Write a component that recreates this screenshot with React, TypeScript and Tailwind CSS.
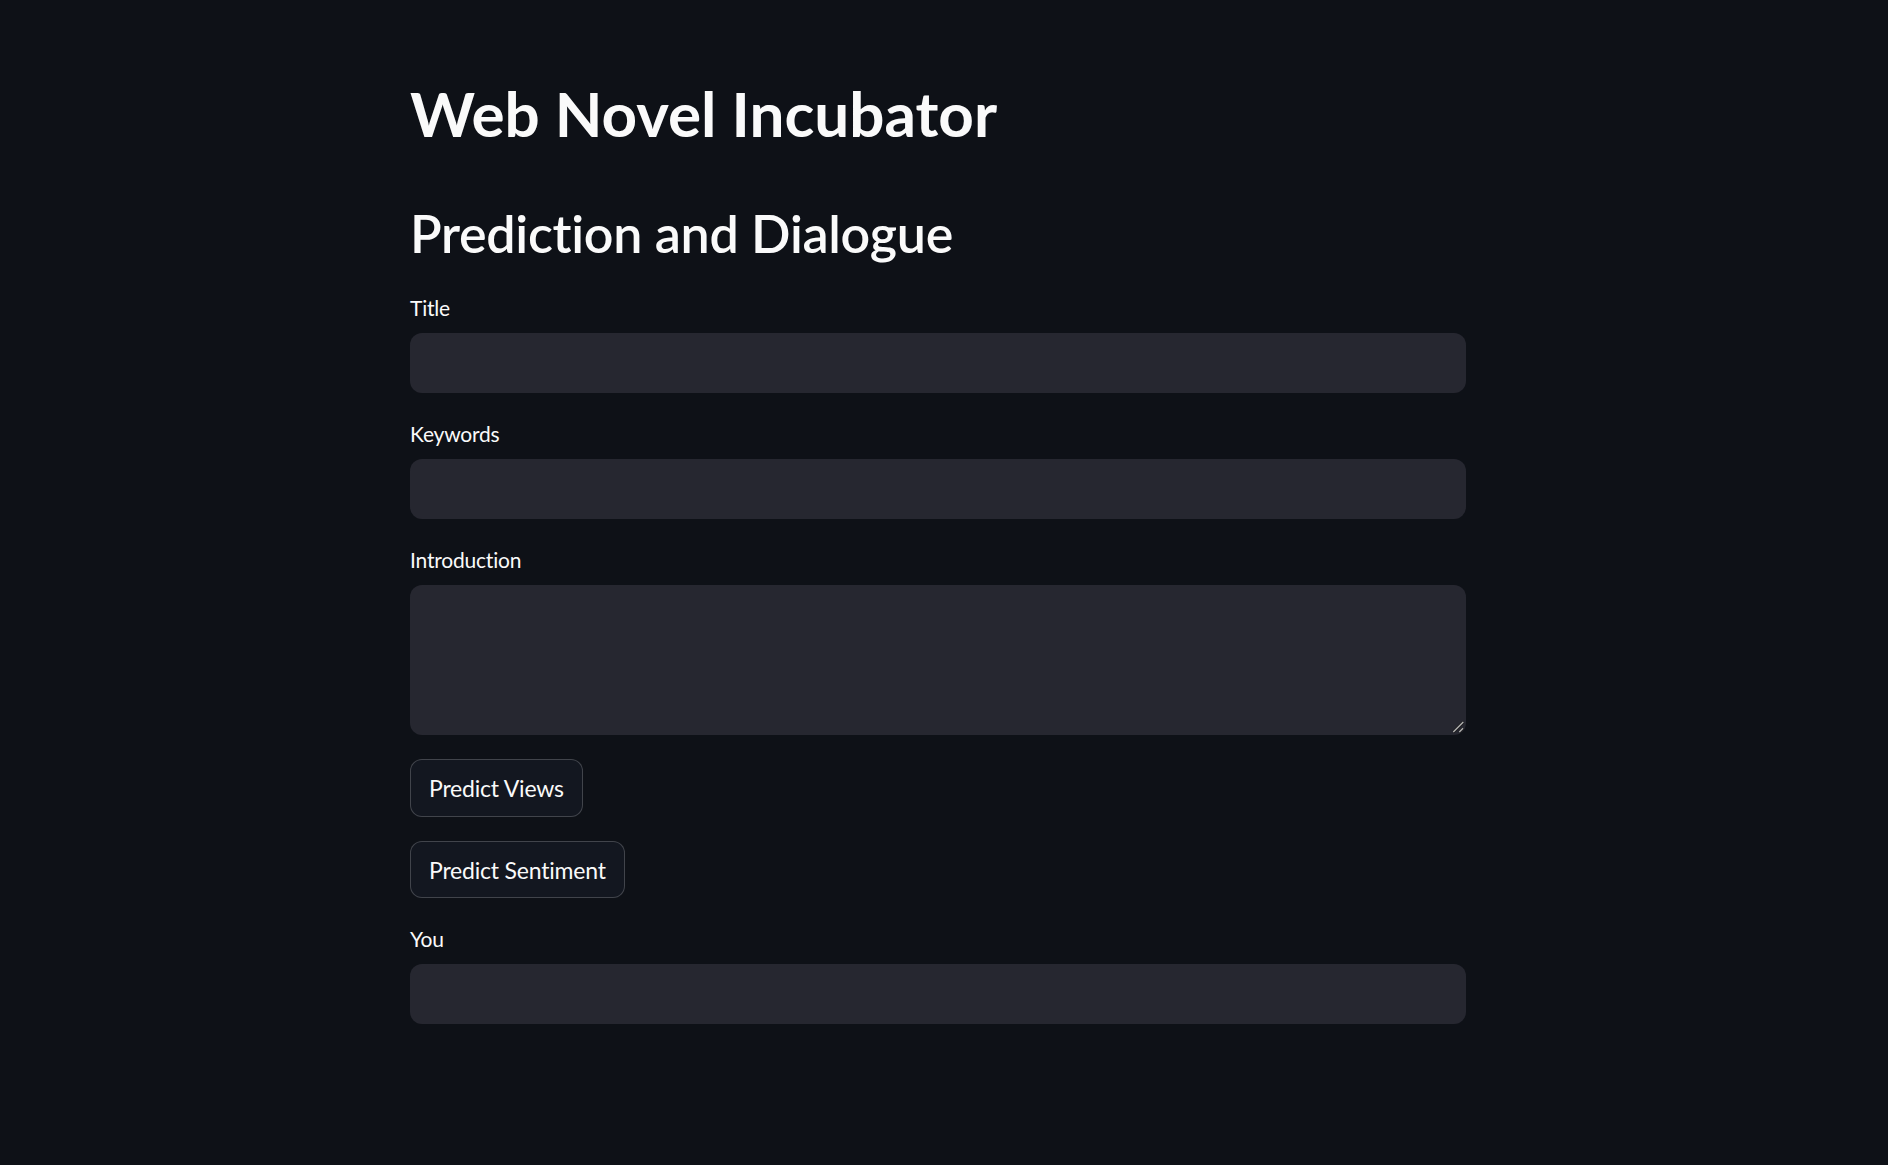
import React from "react";

function Field({ label, children }: { label: string; children: React.ReactNode }) {
  return (
    <div className="flex flex-col">
      <div className="h-[42px] pt-[4px]">
        <label className="block text-[21px] leading-[25px] tracking-[-0.2px] text-[#fafafa]">{label}</label>
      </div>
      {children}
    </div>
  );
}

function TextInput() {
  return (
    <input
      type="text"
      className="h-[60px] w-full rounded-[12px] bg-[#262730] px-[18px] text-[21px] text-[#fafafa] outline-none"
    />
  );
}

function Btn({ children }: { children: React.ReactNode }) {
  return (
    <div>
      <button className="h-[57.6px] rounded-[12px] border border-[rgba(250,250,250,0.2)] bg-[#131720] px-[18px] text-[23px] leading-[30px] tracking-[-0.2px] text-[#fafafa]">
        {children}
      </button>
    </div>
  );
}

export default function App() {
  return (
    <div
      className="min-h-screen w-full bg-[#0e1117] pl-[410px] text-[#fafafa] [font-variant-ligatures:none]"
      style={{ fontFamily: "Lato, 'Noto Sans', sans-serif" }}
    >
      <div className="flex w-[1056px] flex-col pb-[140px]">
        <h1 className="mt-[75.5px] text-[62px] font-bold leading-[1.2] text-[#fafafa]">
          Web Novel Incubator
        </h1>
        <h2 className="mt-[52px] text-[52px] font-semibold leading-[1.2] tracking-[-0.3px] text-[#fafafa]">
          Prediction and Dialogue
        </h2>
        <div className="mt-[27px] flex flex-col gap-[24px]">
          <Field label="Title">
            <TextInput />
          </Field>
          <Field label="Keywords">
            <TextInput />
          </Field>
          <Field label="Introduction">
            <div className="relative h-[150px] w-full">
              <textarea className="block h-[150px] w-full resize-none rounded-[12px] bg-[#262730] px-[18px] py-[12px] text-[21px] text-[#fafafa] outline-none" />
              <svg
                className="pointer-events-none absolute bottom-0 right-0"
                width="14"
                height="14"
                viewBox="0 0 14 14"
              >
                <line x1="1.3" y1="11" x2="11.3" y2="1" stroke="#1a1a1a" strokeWidth="2.6" />
                <line x1="7.3" y1="11" x2="11" y2="7.3" stroke="#1a1a1a" strokeWidth="2.6" />
                <line x1="1.3" y1="11" x2="11.3" y2="1" stroke="#b4b4b4" strokeWidth="1.3" />
                <line x1="7.3" y1="11" x2="11" y2="7.3" stroke="#b4b4b4" strokeWidth="1.3" />
              </svg>
            </div>
          </Field>
          <Btn>Predict Views</Btn>
          <Btn>Predict Sentiment</Btn>
          <Field label="You">
            <TextInput />
          </Field>
        </div>
      </div>
    </div>
  );
}
